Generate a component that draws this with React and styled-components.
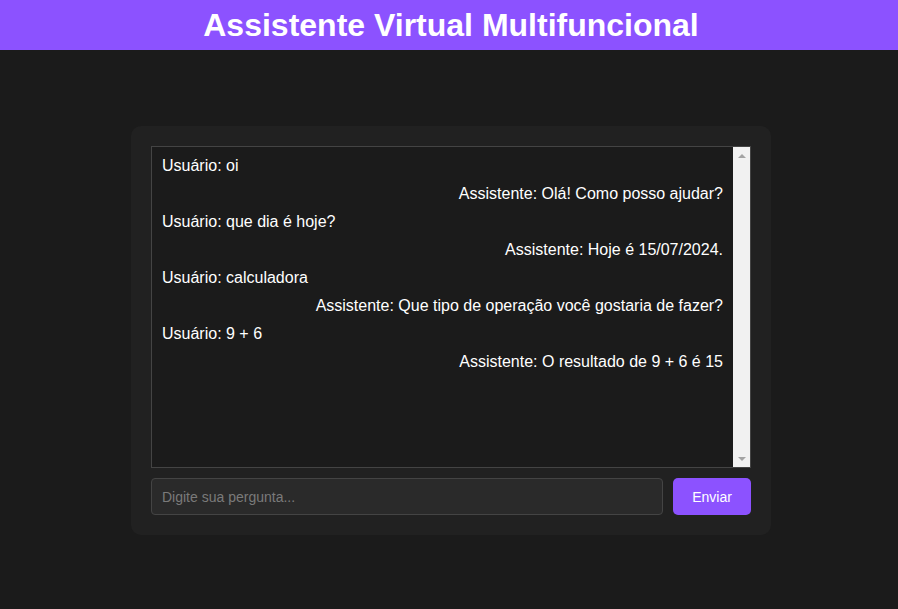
import React, { useState } from "react";
import styled, { createGlobalStyle } from "styled-components";

const GlobalStyle = createGlobalStyle`
  html, body {
    margin: 0;
    padding: 0;
    background: #1b1b1b;
    color: #fff;
    font-family: "Liberation Sans", Arial, sans-serif;
  }
  * {
    box-sizing: border-box;
  }
`;

const messages = [
  { from: "user", text: "Usuário: oi" },
  { from: "bot", text: "Assistente: Olá! Como posso ajudar?" },
  { from: "user", text: "Usuário: que dia é hoje?" },
  { from: "bot", text: "Assistente: Hoje é 15/07/2024." },
  { from: "user", text: "Usuário: calculadora" },
  { from: "bot", text: "Assistente: Que tipo de operação você gostaria de fazer?" },
  { from: "user", text: "Usuário: 9 + 6" },
  { from: "bot", text: "Assistente: O resultado de 9 + 6 é 15" },
];

export default function App() {
  const [value, setValue] = useState("");
  return (
    <>
      <GlobalStyle />
      <Header>
        <Title>Assistente Virtual Multifuncional</Title>
      </Header>
      <Main>
        <Panel>
          <ChatBox>
            <MessageList>
              {messages.map((m, i) => (
                <Message key={i} $bot={m.from === "bot"}>
                  {m.text}
                </Message>
              ))}
            </MessageList>
            <ScrollTrack>
              <ScrollButton>
                <Arrow $dir="up" />
              </ScrollButton>
              <ScrollButton>
                <Arrow $dir="down" />
              </ScrollButton>
            </ScrollTrack>
          </ChatBox>
          <InputRow>
            <Input
              placeholder="Digite sua pergunta..."
              value={value}
              onChange={(e) => setValue(e.target.value)}
            />
            <SendButton>Enviar</SendButton>
          </InputRow>
        </Panel>
      </Main>
    </>
  );
}

const Header = styled.header`
  height: 50px;
  padding-left: 4px;
  background: #8c52ff;
  display: flex;
  align-items: center;
  justify-content: center;
`;

const Title = styled.h1`
  margin: 0;
  font-size: 32px;
  font-weight: bold;
  color: #fff;
`;

const Main = styled.main`
  min-height: calc(100vh - 50px);
  padding: 2px 0 0 4px;
  display: flex;
  align-items: center;
  justify-content: center;
`;

const Panel = styled.div`
  width: 640px;
  padding: 20px;
  background: #212121;
  border-radius: 10px;
`;

const ChatBox = styled.div`
  height: 322px;
  display: flex;
  border: 1px solid #444;
  background: #1b1b1b;
  margin-bottom: 10px;
`;

const MessageList = styled.div`
  flex: 1;
  padding: 10px;
  overflow: hidden;
`;

const ScrollTrack = styled.div`
  width: 17px;
  background: #f1f1f1;
  display: flex;
  flex-direction: column;
  justify-content: space-between;
`;

const ScrollButton = styled.div`
  width: 17px;
  height: 17px;
  display: flex;
  align-items: center;
  justify-content: center;
`;

const Arrow = styled.span`
  width: 0;
  height: 0;
  border-left: 4px solid transparent;
  border-right: 4px solid transparent;
  ${(p) =>
    p.$dir === "up"
      ? "border-bottom: 4px solid #a3a3a3;"
      : "border-top: 4px solid #a3a3a3;"}
`;

const Message = styled.div`
  font-size: 16px;
  line-height: 18px;
  margin-bottom: 10px;
  text-align: ${(p) => (p.$bot ? "right" : "left")};
`;

const InputRow = styled.div`
  display: flex;
  gap: 10px;
`;

const Input = styled.input`
  flex: 1;
  height: 37px;
  padding: 0 10px;
  background: #2a2a2a;
  border: 1px solid #444;
  border-radius: 4px;
  color: #fff;
  font-family: "Liberation Sans", Arial, sans-serif;
  font-size: 14px;
  outline: none;
  &::placeholder {
    color: #7a7a7a;
  }
`;

const SendButton = styled.button`
  width: 78px;
  height: 37px;
  background: #8c52ff;
  border: none;
  border-radius: 5px;
  color: #fff;
  font-family: "Liberation Sans", Arial, sans-serif;
  font-size: 14px;
  cursor: pointer;
`;
